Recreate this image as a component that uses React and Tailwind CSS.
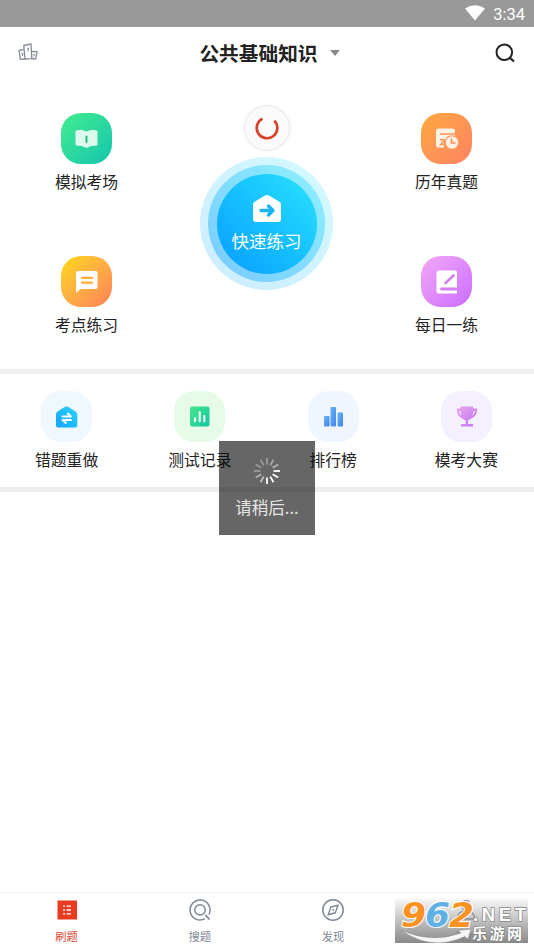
import { useState } from 'react';

const BookIcon = () => (
  <svg width="51" height="51" viewBox="0 0 51 51">
    <path d="M15 18 Q20.500 16.200 25.500 19 Q30.500 16.200 36 18 V32 Q30.500 31.500 25.500 34.500 Q20.500 31.500 15 32 Z" fill="#dcfbee" stroke="#dcfbee" strokeWidth="1" strokeLinejoin="round" />
    <path d="M25.500 23.500 V29" stroke="#15b578" strokeWidth="1.800" strokeLinecap="round" />
  </svg>
);

const HistoryIcon = () => (
  <svg width="51" height="51" viewBox="0 0 51 51">
    <path d="M17 15.500 H31.500 Q34 15.500 34 18 V23 H27 L23 28 V34.500 H17.500 Q15 34.500 15 32 V18 Q15 15.500 17.500 15.500 Z" fill="#fff1e6" />
    <path d="M19 21 H34" stroke="#ff9350" strokeWidth="1.500" />
    <path d="M19 26.800 H23.500 M23.500 27.500 L19.500 31.500 H24" fill="none" stroke="#ff9350" strokeWidth="1.400" />
    <circle cx="31" cy="29.500" r="6.700" fill="#fff1e6" stroke="#ff9350" strokeWidth="1" />
    <path d="M30.500 26 V30 H34" fill="none" stroke="#ff8d55" strokeWidth="1.600" strokeLinecap="round" />
  </svg>
);

const ChatIcon = () => (
  <svg width="51" height="51" viewBox="0 0 51 51">
    <path d="M17 15 H34.500 Q36.500 15 36.500 17 V31 Q36.500 33 34.500 33 H19.500 L15 37 V17 Q15 15 17 15 Z" fill="#fff" />
    <path d="M21 21.800 H31 M21 26.600 H31" stroke="#ffad2d" strokeWidth="2.300" strokeLinecap="round" />
  </svg>
);

const NoteIcon = () => (
  <svg width="51" height="51" viewBox="0 0 51 51">
    <path d="M18 14.500 H34 Q36 14.500 36 16.500 V37.500 H18 Q15.500 37.500 15.500 35 V17 Q15.500 14.500 18 14.500 Z" fill="#fff" />
    <path d="M24.500 27 L32.500 19.500" stroke="#d47df5" strokeWidth="2.600" strokeLinecap="round" />
    <path d="M20.500 33 H36" stroke="#d47df5" strokeWidth="2.800" strokeLinecap="round" />
  </svg>
);

const RedoIcon = () => (
  <svg width="51" height="51" viewBox="0 0 51 51">
    <defs>
      <linearGradient id="redo" x1="1" y1="0" x2="0" y2="1">
        <stop offset="0" stopColor="#2bd3fb" />
        <stop offset="1" stopColor="#12a4ff" />
      </linearGradient>
    </defs>
    <path d="M16.500 20.500 L24 15.800 Q25.500 15 27 15.800 L34.500 20.500 Q36.300 21.500 36.300 23.500 V34.500 Q36.300 36.500 34.300 36.500 H17 Q15 36.500 15 34.500 V23 Q15 21.500 16.500 20.500 Z" fill="url(#redo)" />
    <path d="M21.500 25.500 H30 L26.800 22.500 M30 29 H21.500 L24.800 32" fill="none" stroke="#fff" strokeWidth="1.900" strokeLinecap="round" strokeLinejoin="round" />
  </svg>
);

const RecordIcon = () => (
  <svg width="51" height="51" viewBox="0 0 51 51">
    <defs>
      <linearGradient id="record" x1="0" y1="0" x2="1" y2="1">
        <stop offset="0" stopColor="#45e68a" />
        <stop offset="1" stopColor="#12c6a2" />
      </linearGradient>
    </defs>
    <rect x="16" y="15.500" width="19.500" height="20" rx="2" fill="url(#record)" />
    <path d="M21 27 V30.300 M25.700 21 V30.300 M30.300 25 V30.300" stroke="#e8fff3" strokeWidth="2.200" strokeLinecap="round" />
  </svg>
);

const RankIcon = () => (
  <svg width="51" height="51" viewBox="0 0 51 51">
    <defs>
      <linearGradient id="rank" x1="0" y1="0" x2="1" y2="1">
        <stop offset="0" stopColor="#69b3f8" />
        <stop offset="1" stopColor="#4184ea" />
      </linearGradient>
    </defs>
    <rect x="16" y="25" width="5.500" height="10.500" rx="1" fill="url(#rank)" />
    <rect x="22.500" y="16" width="5.500" height="19.500" rx="1" fill="url(#rank)" />
    <rect x="29.500" y="21.500" width="5.500" height="14" rx="1" fill="url(#rank)" />
  </svg>
);

const TrophyIcon = () => (
  <svg width="51" height="51" viewBox="0 0 51 51">
    <defs>
      <linearGradient id="trophy" x1="0" y1="0" x2="1" y2="1">
        <stop offset="0" stopColor="#eba3f3" />
        <stop offset="1" stopColor="#bd76ec" />
      </linearGradient>
    </defs>
    <path d="M19.500 15.500 H32 V17.500 H36 Q36.500 25.500 29.500 28 Q28 29 27 29.500 V33 H32 V35.500 H20 V33 H24.700 V29.500 Q23.500 29 22 28 Q15.500 25.500 15.800 17.500 H19.500 Z" fill="url(#trophy)" />
    <path d="M18 20 Q18.300 23.500 20.500 25 Q19.500 22.500 19.500 20 Z M33.800 20 Q33.500 23.500 31.300 25 Q32.200 22.500 32.200 20 Z" fill="#f4f0ff" />
  </svg>
);

const PodiumIcon = () => (
  <svg width="20" height="18" viewBox="0 0 20 18" className="-mt-0.5" fill="none" stroke="#858c99" strokeWidth="1.300" strokeLinejoin="round">
    <path d="M5.800 2.500 L13 1 L13.800 15.700 L7 16 Z" />
    <path d="M6.100 6.300 L1 7.500 L2.500 16.300 L7 16 M13.300 8.500 L19 8.700 L17.700 16 L13.800 15.700" />
    <path d="M9 5.500 L10.500 5 L9.800 8.500 M3.500 10.300 L5 10.700 L4.500 13 M15 11 L16.500 11.500 L15.500 13.500" strokeWidth="1" />
  </svg>
);

const heroLeft = [
  { label: '模拟考场', icon: <BookIcon />, tile: 'bg-linear-to-br from-[#42ec8c] to-[#10c5ae]' },
  { label: '考点练习', icon: <ChatIcon />, tile: 'bg-linear-to-br from-[#ffd800] to-[#ff7f57]' },
];

const heroRight = [
  { label: '历年真题', icon: <HistoryIcon />, tile: 'bg-linear-to-br from-[#ffa83d] to-[#ff8262]' },
  { label: '每日一练', icon: <NoteIcon />, tile: 'bg-linear-to-br from-[#f4a8f5] to-[#cb6bff]' },
];

const tools = [
  { label: '错题重做', icon: <RedoIcon />, tile: 'bg-[#eff7ff]' },
  { label: '测试记录', icon: <RecordIcon />, tile: 'bg-[#e7fce8]' },
  { label: '排行榜', icon: <RankIcon />, tile: 'bg-[#eff6ff]' },
  { label: '模考大赛', icon: <TrophyIcon />, tile: 'bg-[#f4f0ff]' },
];

const tabs = [
  {
    label: '刷题',
    icon: (
      <svg width="24" height="24" viewBox="0 0 24 24">
        <rect x="2.500" y="2.500" width="19.500" height="19" fill="#e83b20" />
        <path d="M8 8.200 H10 M11.500 8.200 H16 M8 12 H10 M11.500 12 H16 M8 15.800 H10 M11.500 15.800 H16" stroke="#fff" strokeWidth="1.300" />
      </svg>
    ),
  },
  {
    label: '搜题',
    icon: (
      <svg width="24" height="24" viewBox="0 0 24 24" fill="none" stroke="#7f8795" strokeWidth="1.500">
        <path d="M17 20.700 A10 10 0 1 1 21 16.500" />
        <circle cx="12" cy="11.900" r="5.200" />
        <path d="M17.300 16.800 L21.500 21.300" strokeWidth="1.800" />
      </svg>
    ),
  },
  {
    label: '发现',
    icon: (
      <svg width="24" height="24" viewBox="0 0 24 24" fill="none" stroke="#7f8795" strokeWidth="1.500">
        <circle cx="12" cy="12" r="10.200" />
        <path d="M9.800 9 L17 7.300 L14.300 14.800 L7.300 16.700 Z" strokeWidth="1.400" />
        <circle cx="12.200" cy="12" r=".9" fill="#7f8795" stroke="none" />
      </svg>
    ),
  },
  {
    label: '我的',
    icon: (
      <svg width="24" height="24" viewBox="0 0 24 24" fill="none" stroke="#7f8795" strokeWidth="1.500">
        <circle cx="12" cy="7" r="4.500" />
        <path d="M3 21 Q4 13 12 13 Q20 13 21 21 Z" />
      </svg>
    ),
  },
];

const Entry = ({ item }) => (
  <div className="flex flex-col items-center">
    <div className={`size-[51px] rounded-[20px] ${item.tile}`}>{item.icon}</div>
    <span className="mt-1.5 text-[15.8px] leading-6 whitespace-nowrap">{item.label}</span>
  </div>
);

// clockwise from the top
const spokeOpacity = [0.35, 0.45, 0.5, 1, 1, 1, 1, 0.6, 0.5, 0.35, 0.35, 0.35];

const Loading = () => (
  <div className="absolute left-[219px] top-[441px] w-24 h-[94px] bg-black/60 flex flex-col items-center pt-4">
    <svg width="28" height="28" viewBox="-14 -14 28 28">
      {spokeOpacity.map((opacity, i) => (
        <path key={i} d="M0 -6.500 V-13" stroke="#fff" strokeWidth="1.800" opacity={opacity} transform={`rotate(${i * 30})`} />
      ))}
    </svg>
    <span className="mt-2.5 text-[16.5px] leading-6 text-[#e4e4e4] whitespace-nowrap">请稍后...</span>
  </div>
);

const Watermark = () => (
  <div className="absolute left-[395px] top-[898px] w-[133px] h-[45px] bg-linear-to-b from-[#e8e8e8]/20 to-[#7c7c7c]/90">
    <svg width="133" height="45" viewBox="0 0 133 45">
      <path d="M6 32 Q36 46 66 35 L63 32.500 L76 31 L73 41 L70 38.500 Q36 54 6 32 Z" fill="#f6f6f6" stroke="#888" strokeWidth=".5" />
      <g fontFamily="DejaVu Sans, sans-serif" fontWeight="bold" fontStyle="italic" fontSize="33" stroke="#fff" strokeWidth="2" paintOrder="stroke">
        <text x="6" y="28.500" textLength="25" lengthAdjust="spacingAndGlyphs" fill="#fb9224">9</text>
        <text x="30" y="28.500" textLength="25" lengthAdjust="spacingAndGlyphs" fill="#5eb1e5">6</text>
        <text x="54" y="28.500" textLength="25" lengthAdjust="spacingAndGlyphs" fill="#fb9224">2</text>
      </g>
      <text x="78" y="23" textLength="53" fontFamily="Liberation Sans, sans-serif" fontWeight="bold" fontSize="18.500" fill="#fff" stroke="#888" strokeWidth="1.500" paintOrder="stroke">.NET</text>
      <text x="77" y="41" textLength="50" fontFamily="Noto Sans CJK SC, sans-serif" fontWeight="bold" fontSize="15" fill="#fff" stroke="#777" strokeWidth="1" paintOrder="stroke">乐游网</text>
    </svg>
  </div>
);

const App = () => {
  const [active, setActive] = useState(0);

  return (
    <div className="relative flex flex-col w-[534px] h-[949px] overflow-hidden bg-white text-[#222] font-['Noto_Sans_CJK_SC',sans-serif]">
      <div className="flex items-center justify-end h-[27px] shrink-0 bg-[#999] pr-[9px] gap-2">
        <svg width="20" height="16" viewBox="0 0 20 16" className="-mt-0.5">
          <path d="M0 3.500 Q10 -3 20 3.500 L10 15.500 Z" fill="#fff" />
        </svg>
        <span className="mt-0.5 text-[16.5px] leading-5 text-white font-[Roboto,sans-serif]">3:34</span>
      </div>

      <header className="grid grid-cols-[1fr_auto_1fr] items-center h-[53px] shrink-0 px-[18px] pb-px">
        <PodiumIcon />
        <div className="flex items-center pl-[5px] -mt-px">
          <h1 className="text-[19.7px] leading-7 font-bold whitespace-nowrap">公共基础知识</h1>
          <span className="ml-3 w-0 h-0 border-x-[5px] border-x-transparent border-t-[6px] border-t-[#888]" />
        </div>
        <svg className="justify-self-end" width="22" height="22" viewBox="0 0 22 22" fill="none" stroke="#222" strokeWidth="2">
          <circle cx="10.300" cy="10.300" r="7.800" />
          <path d="M15.500 15.500 L20 19.500" strokeWidth="2.300" />
        </svg>
      </header>

      <section className="grid grid-cols-[173px_187px_173px] h-[289px] shrink-0">
        <div className="flex flex-col pt-[33px] gap-[62px]">
          {heroLeft.map((item) => <Entry key={item.label} item={item} />)}
        </div>
        <div className="flex flex-col items-center pt-[26px]">
          <div className="flex items-center justify-center size-11 rounded-full bg-[#fafafa] shadow-[0_0_3px_rgba(0,0,0,0.22)]">
            <svg width="26" height="26" viewBox="-13 -13 26 26">
              <path d="M-4.500 -9.300 A10.300 10.300 0 1 0 7.300 -7.300" fill="none" stroke="#d9402a" strokeWidth="2.600" />
            </svg>
          </div>
          <button className="mt-[7px] size-[133px] rounded-full p-2 bg-linear-to-tr from-[#ccecff] to-[#d3faff]">
            <div className="size-full rounded-full p-[8.5px] bg-linear-to-tr from-[#78c9ff] to-[#8ff1ff]">
              <div className="flex flex-col items-center size-full rounded-full pt-5 bg-linear-to-tr from-[#0c9cff] to-[#2be3ff]">
                <svg width="28" height="28" viewBox="0 0 28 28">
                  <path d="M2 7.500 L12 1.500 Q14 .3 16 1.500 L26 7.500 Q28 8.700 28 10.500 V25 Q28 28 25 28 H3 Q0 28 0 25 V10.500 Q0 8.700 2 7.500 Z" fill="#fff" />
                  <path d="M8 16.500 H19 M15.500 12 L20 16.500 L15.500 21" fill="none" stroke="#19b5f4" strokeWidth="3.400" strokeLinecap="round" strokeLinejoin="round" />
                </svg>
                <span className="mt-[7px] text-[17.5px] leading-6 text-white whitespace-nowrap">快速练习</span>
              </div>
            </div>
          </button>
        </div>
        <div className="flex flex-col pt-[33px] gap-[62px]">
          {heroRight.map((item) => <Entry key={item.label} item={item} />)}
        </div>
      </section>

      <div className="h-[5px] shrink-0 bg-[#eee]" />
      <section className="grid grid-cols-4 w-[533px] h-[113px] shrink-0 pt-[17px]">
        {tools.map((item) => <Entry key={item.label} item={item} />)}
      </section>
      <div className="h-[5px] shrink-0 bg-[#eee]" />

      <main className="flex-1" />

      <nav className="grid grid-cols-4 h-[57px] shrink-0 border-t border-[#f5f5f5] pt-[5px] pr-px">
        {tabs.map((tab, index) => (
          <button key={tab.label} onClick={() => setActive(index)} className="flex flex-col items-center">
            {tab.icon}
            <span className={`mt-1.5 text-[11.3px] leading-4 ${active === index ? 'text-[#e0452f]' : 'text-[#7f8795]'}`}>{tab.label}</span>
          </button>
        ))}
      </nav>

      <Loading />
      <Watermark />
    </div>
  );
};

export default App;
